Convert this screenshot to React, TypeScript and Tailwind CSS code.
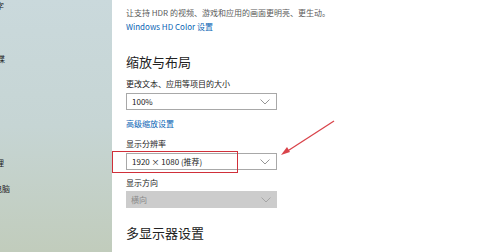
import React from 'react';

const Chevron: React.FC<{ className?: string }> = ({ className }) => (
  <svg width="10" height="6" viewBox="0 0 10 6" className={className}>
    <path d="M0.5 0.5 L5 5 L9.5 0.5" fill="none" stroke="currentColor" strokeWidth="0.9" />
  </svg>
);

const Select: React.FC<{ value: string; disabled?: boolean }> = ({ value, disabled }) => (
  <div
    className={
      disabled
        ? 'w-[151px] h-[17px] flex items-center justify-between pl-[5px] pr-[6px] bg-[#cccccc] text-[#8a8a8a] text-[8px]'
        : 'w-[151px] h-[17px] flex items-center justify-between pl-[5px] pr-[6px] bg-white border border-[#a8a8a8] text-[#222] text-[8px]'
    }
  >
    <span>{value}</span>
    <Chevron className={disabled ? 'text-[#a0a0a0]' : 'text-[#8a8a8a]'} />
  </div>
);

export default function App() {
  return (
    <div
      className="w-[500px] h-[252px] flex overflow-hidden bg-white"
      style={{ fontFamily: '"Noto Sans CJK SC", "Noto Sans", sans-serif' }}
    >
      {/* sidebar, cut off at the left */}
      <div className="w-[112px] shrink-0 h-full overflow-hidden bg-gradient-to-b from-[#cad9dc] via-[#c6d5d4] to-[#c1ccbc] text-[8px] leading-[11px] text-[#222] flex flex-col">
        <div className="-ml-[12px] whitespace-nowrap">打字</div>
        <div className="-ml-[11px] mt-[42px] whitespace-nowrap">光碟</div>
        <div className="-ml-[12px] mt-[93px] whitespace-nowrap">管理</div>
        <div className="-ml-[22px] mt-[15px] whitespace-nowrap">到此电脑</div>
      </div>

      {/* main */}
      <div className="flex-1 pl-[14px] pt-[7px] flex flex-col text-[#222]">
        <p className="text-[8px] text-[#5a5a5a] leading-[11px]">
          让支持 HDR 的视频、游戏和应用的画面更明亮、更生动。
        </p>
        <p className="text-[8px] text-[#0a64b4] leading-[11px] mt-[3px]">Windows HD Color 设置</p>

        <h2 className="text-[13px] leading-[18px] mt-[21px]">缩放与布局</h2>

        <p className="text-[8px] leading-[11px] mt-[7px]">更改文本、应用等项目的大小</p>
        <div className="mt-[4px]">
          <Select value="100%" />
        </div>
        <p className="text-[8px] text-[#0a64b4] leading-[11px] mt-[8px]">高级缩放设置</p>

        <p className="text-[8px] leading-[11px] mt-[9px]">显示分辨率</p>
        <div className="mt-[4px] relative">
          <Select value="1920 × 1080 (推荐)" />
          <div className="absolute -left-[14px] -top-[2px] w-[126px] h-[22px] border-[1.5px] border-[#d0303a]" />
        </div>

        <p className="text-[8px] leading-[11px] mt-[7px]">显示方向</p>
        <div className="mt-[3px]">
          <Select value="横向" disabled />
        </div>

        <h2 className="text-[13px] leading-[18px] mt-[16px]">多显示器设置</h2>
      </div>

      {/* red arrow annotation */}
      <svg className="absolute left-0 top-0 pointer-events-none" width="500" height="252">
        <line x1="334" y1="121" x2="286" y2="152" stroke="#d9434a" strokeWidth="1.3" />
        <path d="M281 155 L287 147 L290 152 Z" fill="#d9434a" />
      </svg>
    </div>
  );
}
